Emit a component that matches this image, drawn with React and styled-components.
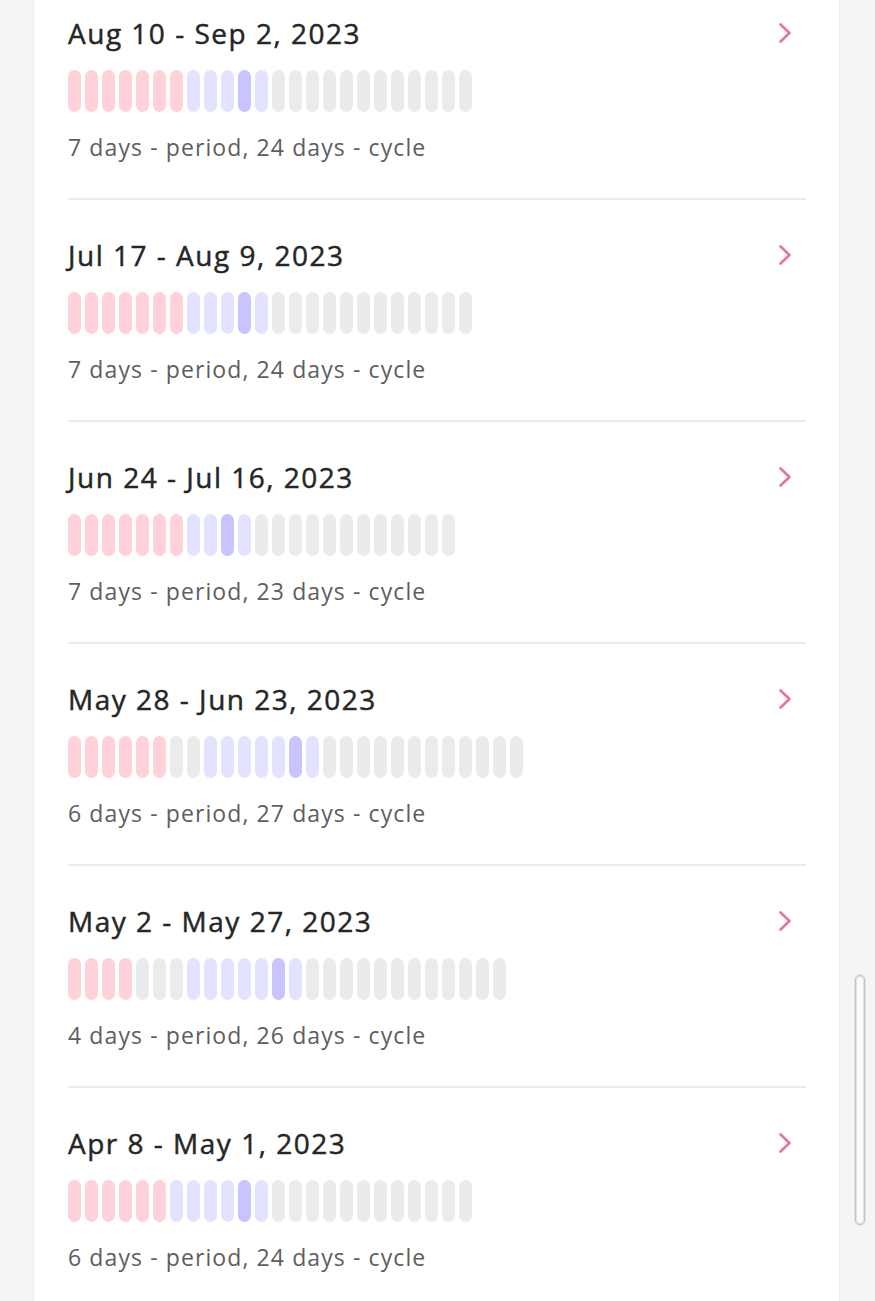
import React from 'react';
import styled, { createGlobalStyle } from 'styled-components';

const GlobalStyle = createGlobalStyle`
  html, body {
    margin: 0;
    padding: 0;
    background: #f4f4f4;
    font-family: 'Open Sans', 'Lato', sans-serif;
    overflow: hidden;
  }
`;

const Page = styled.div`
  min-height: 1301px;
  overflow: hidden;
`;

const Card = styled.div`
  margin: -22px 35px 0 33px;
  background: #ffffff;
  border-left: 1px solid #ececec;
  border-right: 1px solid #ececec;
  padding: 0 33px 0 34px;
`;

const Item = styled.div`
  padding-top: 38px;
  border-bottom: 2px solid #ebebeb;
  padding-bottom: 36px;
`;

const Header = styled.div`
  display: flex;
  align-items: center;
  justify-content: space-between;
  height: 34px;
`;

const Title = styled.h3`
  margin: 0;
  font-size: 28px;
  line-height: 34px;
  font-weight: 400;
  letter-spacing: 1.5px;
  -webkit-text-stroke: 0.45px #262626;
  color: #262626;
`;

const Chevron = styled.svg`
  margin-right: 14px;
  flex: none;
`;

const Bars = styled.div`
  display: flex;
  gap: 4px;
  margin-top: 20px;
`;

const colors = {
  period: '#ffd1d9',
  fertile: '#e3e3ff',
  ovulation: '#c8c4ff',
  normal: '#ebebeb',
};

const Bar = styled.span`
  display: block;
  width: 13px;
  height: 42px;
  border-radius: 7px;
  background: ${(props) => colors[props.kind]};
`;

const Summary = styled.p`
  margin: 20px 0 0;
  font-size: 23px;
  line-height: 30px;
  letter-spacing: 1.1px;
  color: #5e5e5e;
`;

const ScrollThumb = styled.div`
  position: fixed;
  left: 855px;
  top: 975px;
  width: 8px;
  height: 248px;
  border: 1.5px solid #c2c2c2;
  border-radius: 6px;
  background: #fafafa;
  box-shadow: 0 0 0 1px #e6e6e6, inset 0 0 0 1px #e2e2e2;
`;

const cycles = [
  { title: 'Aug 10 - Sep 2, 2023', period: 7, cycle: 24 },
  { title: 'Jul 17 - Aug 9, 2023', period: 7, cycle: 24 },
  { title: 'Jun 24 - Jul 16, 2023', period: 7, cycle: 23 },
  { title: 'May 28 - Jun 23, 2023', period: 6, cycle: 27 },
  { title: 'May 2 - May 27, 2023', period: 4, cycle: 26 },
  { title: 'Apr 8 - May 1, 2023', period: 6, cycle: 24 },
];

const dayKind = (i, period, cycle) => {
  const ovulation = cycle - 14;
  if (i < period) return 'period';
  if (i === ovulation) return 'ovulation';
  if (i >= ovulation - 5 && i <= ovulation + 1) return 'fertile';
  return 'normal';
};

const CycleItem = ({ title, period, cycle }) => (
  <Item>
    <Header>
      <Title>{title}</Title>
      <Chevron width='14' height='22' viewBox='0 0 14 22' fill='none'>
        <polyline
          points='2.5,2.5 11.5,11 2.5,19.5'
          stroke='#e6749c'
          strokeWidth='2.6'
          strokeLinecap='round'
          strokeLinejoin='round'
        />
      </Chevron>
    </Header>
    <Bars>
      {Array.from({ length: cycle }, (_, i) => (
        <Bar key={i} kind={dayKind(i, period, cycle)} />
      ))}
    </Bars>
    <Summary>
      {period} days - period, {cycle} days - cycle
    </Summary>
  </Item>
);

export default function App() {
  return (
    <Page>
      <GlobalStyle />
      <Card>
        {cycles.map((c) => (
          <CycleItem key={c.title} {...c} />
        ))}
      </Card>
      <ScrollThumb />
    </Page>
  );
}
